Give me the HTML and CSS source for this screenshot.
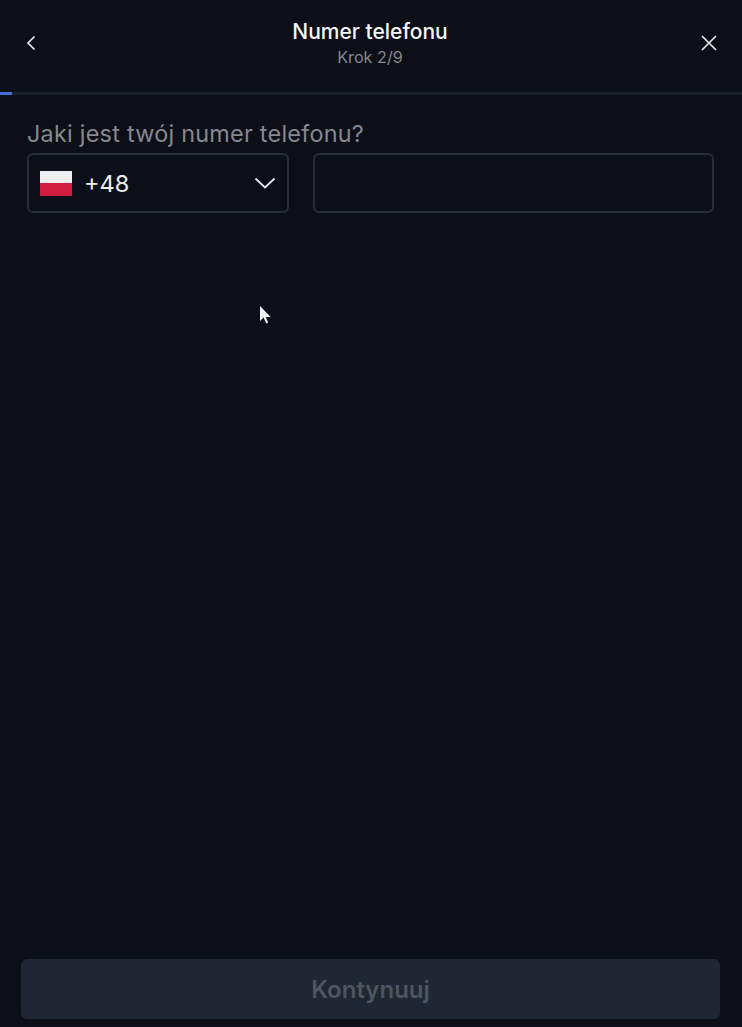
FILE: index.html
```html
<!DOCTYPE html>
<html lang="pl">
<head>
  <meta charset="UTF-8" />
  <meta name="viewport" content="width=device-width, initial-scale=1.0" />
  <title>Numer telefonu</title>
  <link rel="stylesheet" href="styles.css">
</head>
<body>
  <header class="topbar">
    <button class="icon-btn" aria-label="Wstecz">
      <svg width="12" height="18" viewBox="0 0 12 18"><path d="M9.5 2.5 3 9l6.5 6.5" fill="none" stroke="#e6e8ea" stroke-width="1.7"/></svg>
    </button>
    <div class="titles">
      <div class="title">Numer telefonu</div>
      <div class="step">Krok 2/9</div>
    </div>
    <button class="icon-btn" aria-label="Zamknij">
      <svg width="18" height="18" viewBox="0 0 18 18"><path d="M2 2l14 14M16 2L2 16" fill="none" stroke="#e6e8ea" stroke-width="1.7"/></svg>
    </button>
  </header>

  <div class="progress"><div class="progress-fill"></div></div>

  <main class="content">
    <label class="question" for="phone">Jaki jest twój numer telefonu?</label>
    <div class="fields">
      <div class="field country">
        <span class="flag"><span class="flag-white"></span><span class="flag-red"></span></span>
        <span class="prefix">+48</span>
        <svg class="chevron" width="22" height="12" viewBox="0 0 22 12"><path d="M1.5 1.5 11 10.5l9.5-9" fill="none" stroke="#e6e8ea" stroke-width="1.8"/></svg>
      </div>
      <div class="field number" id="phone"></div>
    </div>
  </main>

  <footer class="actions">
    <button class="continue" disabled>Kontynuuj</button>
  </footer>

  <!-- mouse pointer caught in the capture -->
  <svg class="pointer" width="13" height="20" viewBox="0 0 13 20"><path d="M1 1v15l3.6-3.4 2.6 6 2-1-2.5-5.6h5z" fill="#f2f3f4"/></svg>
</body>
</html>
```

FILE: styles.css
```css
html, body {
  height: 100%;
}
body {
  margin: 0;
  position: relative;
  display: flex;
  flex-direction: column;
  background: #0c0f18;
  color: #fff;
  font-family: Inter, "Liberation Sans", sans-serif;
  overflow: hidden;
}
.topbar {
  height: 92px;
  box-sizing: border-box;
  padding: 0 24px 6px 22px;
  display: flex;
  align-items: center;
  justify-content: space-between;
}
.icon-btn {
  width: 18px;
  height: 18px;
  padding: 0;
  border: 0;
  background: none;
  display: flex;
  align-items: center;
  justify-content: center;
}
.titles {
  text-align: center;
}
.title {
  font-size: 21px;
  line-height: 24px;
  font-weight: 500;
  color: #f4f5f6;
}
.step {
  margin-top: 3px;
  font-size: 16.2px;
  line-height: 20px;
  color: #83878e;
}
.progress {
  height: 3px;
  background: #1b222c;
}
.progress-fill {
  width: 12px;
  height: 100%;
  background: #3f6fd8;
}
.content {
  flex: 1;
  padding: 24px 28px 0 27px;
}
.question {
  display: block;
  font-size: 23.4px;
  line-height: 30px;
  letter-spacing: 0.25px;
  color: #85888e;
}
.fields {
  display: flex;
  gap: 24px;
  margin-top: 4px;
}
.field {
  height: 60px;
  box-sizing: border-box;
  border: 2px solid #292d38;
  border-radius: 6px;
}
.country {
  width: 262px;
  padding: 0 11px;
  display: flex;
  align-items: center;
}
.number {
  flex: 1;
}
.flag {
  width: 32px;
  height: 25px;
  display: flex;
  flex-direction: column;
}
.flag-white {
  flex: 1;
  background: #eeeff1;
}
.flag-red {
  flex: 1;
  background: #d31c3f;
}
.prefix {
  margin-left: 12px;
  font-size: 23.5px;
  color: #eceef0;
}
.chevron {
  margin-left: auto;
}
.actions {
  padding: 0 22px 8px 21px;
}
.continue {
  display: block;
  width: 100%;
  height: 60px;
  border: 0;
  border-radius: 6px;
  background: #1e2733;
  color: #50545e;
  font-family: inherit;
  font-size: 24px;
  font-weight: 600;
}
.pointer {
  position: absolute;
  left: 259px;
  top: 305px;
}
```
